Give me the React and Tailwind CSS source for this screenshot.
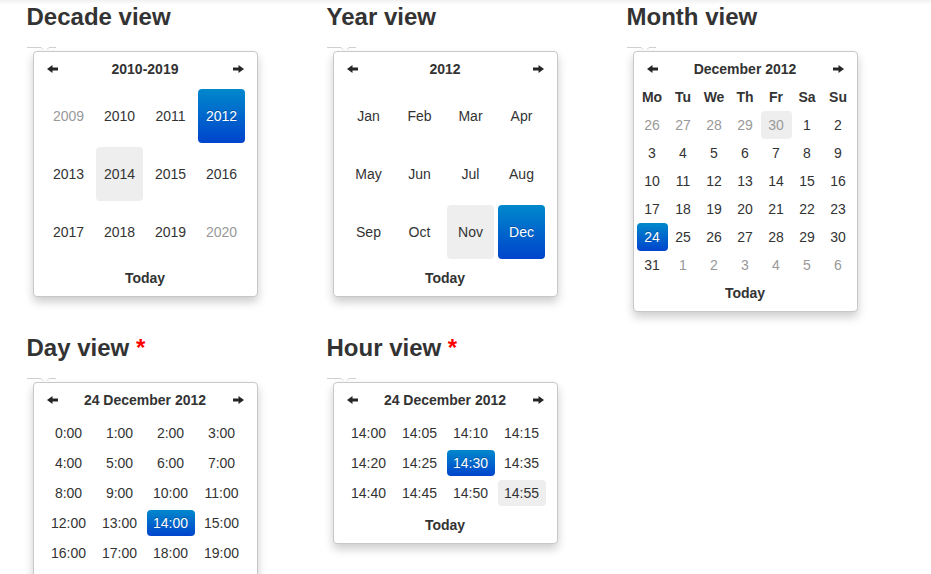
import React from "react";

const Arrow = ({ dir }) => (
  <svg width="11" height="8" viewBox="0 0 11 8" className={dir === "left" ? "-scale-x-100" : ""}>
    <path d="M0 2.5H5.5V0L11 4L5.5 8V5.5H0Z" fill="#262626" />
  </svg>
);

const SEL = "bg-[linear-gradient(to_bottom,#0088cc,#0044cc)] text-white [text-shadow:0_-1px_0_rgba(0,0,0,0.25)]";
const HOV = "bg-[#eeeeee]";

function Box({ title, children, tight }) {
  return (
    <div className="relative ml-[6px] w-[225px] rounded-[4px] border border-[#c8c8c8] bg-white px-[3px] pt-[3px] pb-[4px] shadow-[0_5px_10px_rgba(0,0,0,0.2)]">
      <svg className="absolute left-[-8px] top-[-6px]" width="30" height="6" viewBox="0 0 30 6">
        <path d="M1 1.5H15L17 3.5" stroke="#cfcfcf" strokeWidth="1" fill="none" />
        <path d="M21 3.5L23 1.5H30" stroke="#cfcfcf" strokeWidth="1" fill="none" />
      </svg>
      <div className="flex h-[28px] items-center">
        <div className="flex w-[31px] justify-center"><Arrow dir="left" /></div>
        <div className="flex-1 text-center text-[14px] font-bold text-[#333]">{title}</div>
        <div className="flex w-[31px] justify-center"><Arrow dir="right" /></div>
      </div>
      {children}
      <div className={(tight ? "" : "mt-[3px] ") + "flex h-[28px] items-center justify-center text-[14px] font-bold text-[#333]"}>Today</div>
    </div>
  );
}

function BigGrid({ items }) {
  return (
    <div className="mt-[4px] grid grid-cols-[repeat(4,51px)] justify-center">
      {items.map(([label, kind]) => (
        <div key={label} className="flex h-[58px] items-center justify-center">
          <span
            className={
              "flex h-[54px] w-[47px] items-center justify-center rounded-[4px] text-[14px] " +
              (kind === "sel" ? SEL : kind === "hov" ? HOV + " text-[#333]" : kind === "old" ? "text-[#999]" : "text-[#333]")
            }
          >
            {label}
          </span>
        </div>
      ))}
    </div>
  );
}

function TimeGrid({ items }) {
  return (
    <div className="mt-[4px] grid grid-cols-[repeat(4,51px)] justify-center">
      {items.map(([label, kind]) => (
        <div key={label} className="flex h-[30px] items-center justify-center">
          <span
            className={
              "flex h-[26px] w-[48px] items-center justify-center rounded-[4px] text-[14px] " +
              (kind === "sel" ? SEL : kind === "hov" ? HOV + " text-[#333]" : "text-[#333]")
            }
          >
            {label}
          </span>
        </div>
      ))}
    </div>
  );
}

function MonthGrid() {
  const days = [];
  [26, 27, 28, 29].forEach((d) => days.push([d, "old"]));
  days.push([30, "oldhov"]);
  for (let d = 1; d <= 31; d++) days.push([d, d === 24 ? "sel" : ""]);
  for (let d = 1; d <= 6; d++) days.push([d, "old"]);
  return (
    <div className="grid grid-cols-[repeat(7,31px)] justify-center">
      {["Mo", "Tu", "We", "Th", "Fr", "Sa", "Su"].map((d) => (
        <div key={d} className="flex h-[28px] items-center justify-center text-[14px] font-bold text-[#333]">{d}</div>
      ))}
      {days.map(([d, kind], i) => (
        <div
          key={i}
          className={
            "flex h-[28px] items-center justify-center rounded-[4px] text-[14px] " +
            (kind === "sel" ? SEL : kind === "oldhov" ? HOV + " text-[#999]" : kind === "old" ? "text-[#999]" : "text-[#333]")
          }
        >
          {d}
        </div>
      ))}
    </div>
  );
}

function Section({ heading, star, children }) {
  return (
    <div className="w-[300px] shrink-0">
      <div className="h-[51px] pt-[1px]">
        <h2 className="text-[24px] font-bold leading-[32px] text-[#333]">
          {heading}
          {star && <span className="text-[#ff0000]"> *</span>}
        </h2>
      </div>
      {children}
    </div>
  );
}

export default function App() {
  const decade = [
    ["2009", "old"], ["2010", ""], ["2011", ""], ["2012", "sel"],
    ["2013", ""], ["2014", "hov"], ["2015", ""], ["2016", ""],
    ["2017", ""], ["2018", ""], ["2019", ""], ["2020", "old"],
  ];
  const months = ["Jan", "Feb", "Mar", "Apr", "May", "Jun", "Jul", "Aug", "Sep", "Oct", "Nov", "Dec"].map((m) => [
    m,
    m === "Nov" ? "hov" : m === "Dec" ? "sel" : "",
  ]);
  const hours = Array.from({ length: 24 }, (_, h) => [`${h}:00`, h === 14 ? "sel" : ""]);
  const mins = Array.from({ length: 12 }, (_, i) => {
    const m = String(i * 5).padStart(2, "0");
    return [`14:${m}`, i === 6 ? "sel" : i === 11 ? "hov" : ""];
  });

  return (
    <div className="h-[574px] overflow-hidden bg-white bg-[linear-gradient(to_bottom,#f1f1f1,#ffffff_5px)] font-['Liberation_Sans',Arial,sans-serif] text-[#333]">
      <div className="pl-[26.5px]">
        <div className="flex items-start">
          <Section heading="Decade view">
            <Box title="2010-2019">
              <BigGrid items={decade} />
            </Box>
          </Section>
          <Section heading="Year view">
            <Box title="2012">
              <BigGrid items={months} />
            </Box>
          </Section>
          <Section heading="Month view">
            <Box title="December 2012" tight>
              <MonthGrid />
            </Box>
          </Section>
        </div>
        <div className="mt-[19px] flex items-start">
          <Section heading="Day view" star>
            <Box title="24 December 2012">
              <TimeGrid items={hours} />
            </Box>
          </Section>
          <Section heading="Hour view" star>
            <Box title="24 December 2012">
              <TimeGrid items={mins} />
            </Box>
          </Section>
        </div>
      </div>
    </div>
  );
}
